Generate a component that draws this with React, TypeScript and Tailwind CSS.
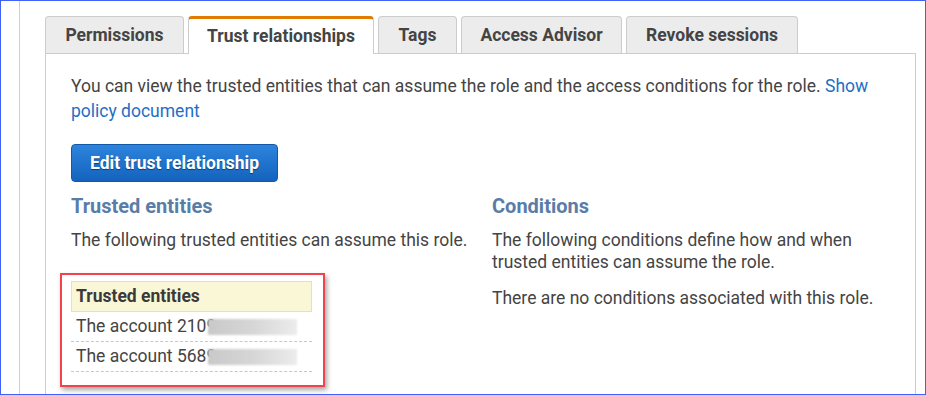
import React from 'react'

const TABS = [
  { label: 'Permissions', w: 'w-[139px]' },
  { label: 'Trust relationships', w: 'w-[186px]', active: true },
  { label: 'Tags', w: 'w-[79px]' },
  { label: 'Access Advisor', w: 'w-[161px]' },
  { label: 'Revoke sessions', w: 'w-[172px]' },
]

const ACCOUNTS = ['2109', '5689']

export default function App() {
  return (
    <div className="w-[926px] h-[395px] overflow-hidden bg-white border border-[#4060f8] font-['Roboto',sans-serif] text-[#444]">
      <div className="ml-[18px] h-full border-l border-[#cfcfcf] pl-[25px] pt-[15px]">
        {/* Tabs */}
        <div className="flex gap-[4px] h-[37px] relative z-10">
          {TABS.map((t) =>
            t.active ? (
              <div
                key={t.label}
                className={`${t.w} h-[38px] bg-white border border-b-0 border-[#ccc] border-t-[3px] border-t-[#e07b00] rounded-t-[4px] flex items-center justify-center text-[17.5px] font-bold text-[#444] pb-[1px]`}
              >
                {t.label}
              </div>
            ) : (
              <div
                key={t.label}
                className={`${t.w} h-[37px] bg-[#ececec] border border-b-0 border-[#ccc] rounded-t-[4px] flex items-center justify-center text-[17.5px] font-bold text-[#444] pt-[1px]`}
              >
                {t.label}
              </div>
            )
          )}
        </div>

        {/* Panel */}
        <div className="w-[871px] h-[400px] border border-[#ccc] px-[25px] pt-[20px]">
          <p className="text-[17.5px] leading-[25px]">
            You can view the trusted entities that can assume the role and the access conditions for the role.{' '}
            <a className="text-[#1f6fc5]">Show policy document</a>
          </p>

          <button className="mt-[20px] w-[207px] h-[38px] rounded-[4px] border border-[#1459a8] bg-gradient-to-b from-[#2d84dc] to-[#1363bd] text-white text-[17.5px] font-bold [text-shadow:0_1px_1px_rgba(0,0,0,0.45)]">
            Edit trust relationship
          </button>

          <div className="flex mt-[12px]">
            {/* Trusted entities column */}
            <div className="w-[421px]">
              <h3 className="text-[20px] leading-[24px] font-bold text-[#5a7da8]">Trusted entities</h3>
              <p className="mt-[11px] text-[17.5px] leading-[22px]">The following trusted entities can assume this role.</p>

              <div className="mt-[22px] ml-[-11px] w-[265px] border-2 border-[#f2434b] pl-[9px] pr-[11px] pt-[6px] pb-[13px] shadow-[2px_3px_5px_rgba(0,0,0,0.35)]">
                <div className="h-[31px] bg-[#faf7d7] border border-[#e7e2b2] pl-[4px] flex items-center text-[17.5px] font-bold text-[#3a3a3a]">
                  Trusted entities
                </div>
                {ACCOUNTS.map((a) => (
                  <div
                    key={a}
                    className="h-[30px] border-b border-dashed border-[#cfcf88] pl-[5px] flex items-center text-[17.5px] overflow-hidden"
                  >
                    <span className="shrink-0">The account {a}</span>
                    <span className="shrink-0 ml-[-8px] w-[89px] h-[16px] bg-gradient-to-r from-[#c9c9c9] via-[#d6d6d6] to-[#ececec] blur-[1px]" />
                  </div>
                ))}
              </div>
            </div>

            {/* Conditions column */}
            <div className="flex-1">
              <h3 className="text-[20px] leading-[24px] font-bold text-[#5a7da8]">Conditions</h3>
              <p className="mt-[11px] text-[17.5px] leading-[22px] w-[385px]">
                The following conditions define how and when trusted entities can assume the role.
              </p>
              <p className="mt-[14px] text-[17.5px] leading-[22px]">There are no conditions associated with this role.</p>
            </div>
          </div>
        </div>
      </div>
    </div>
  )
}
